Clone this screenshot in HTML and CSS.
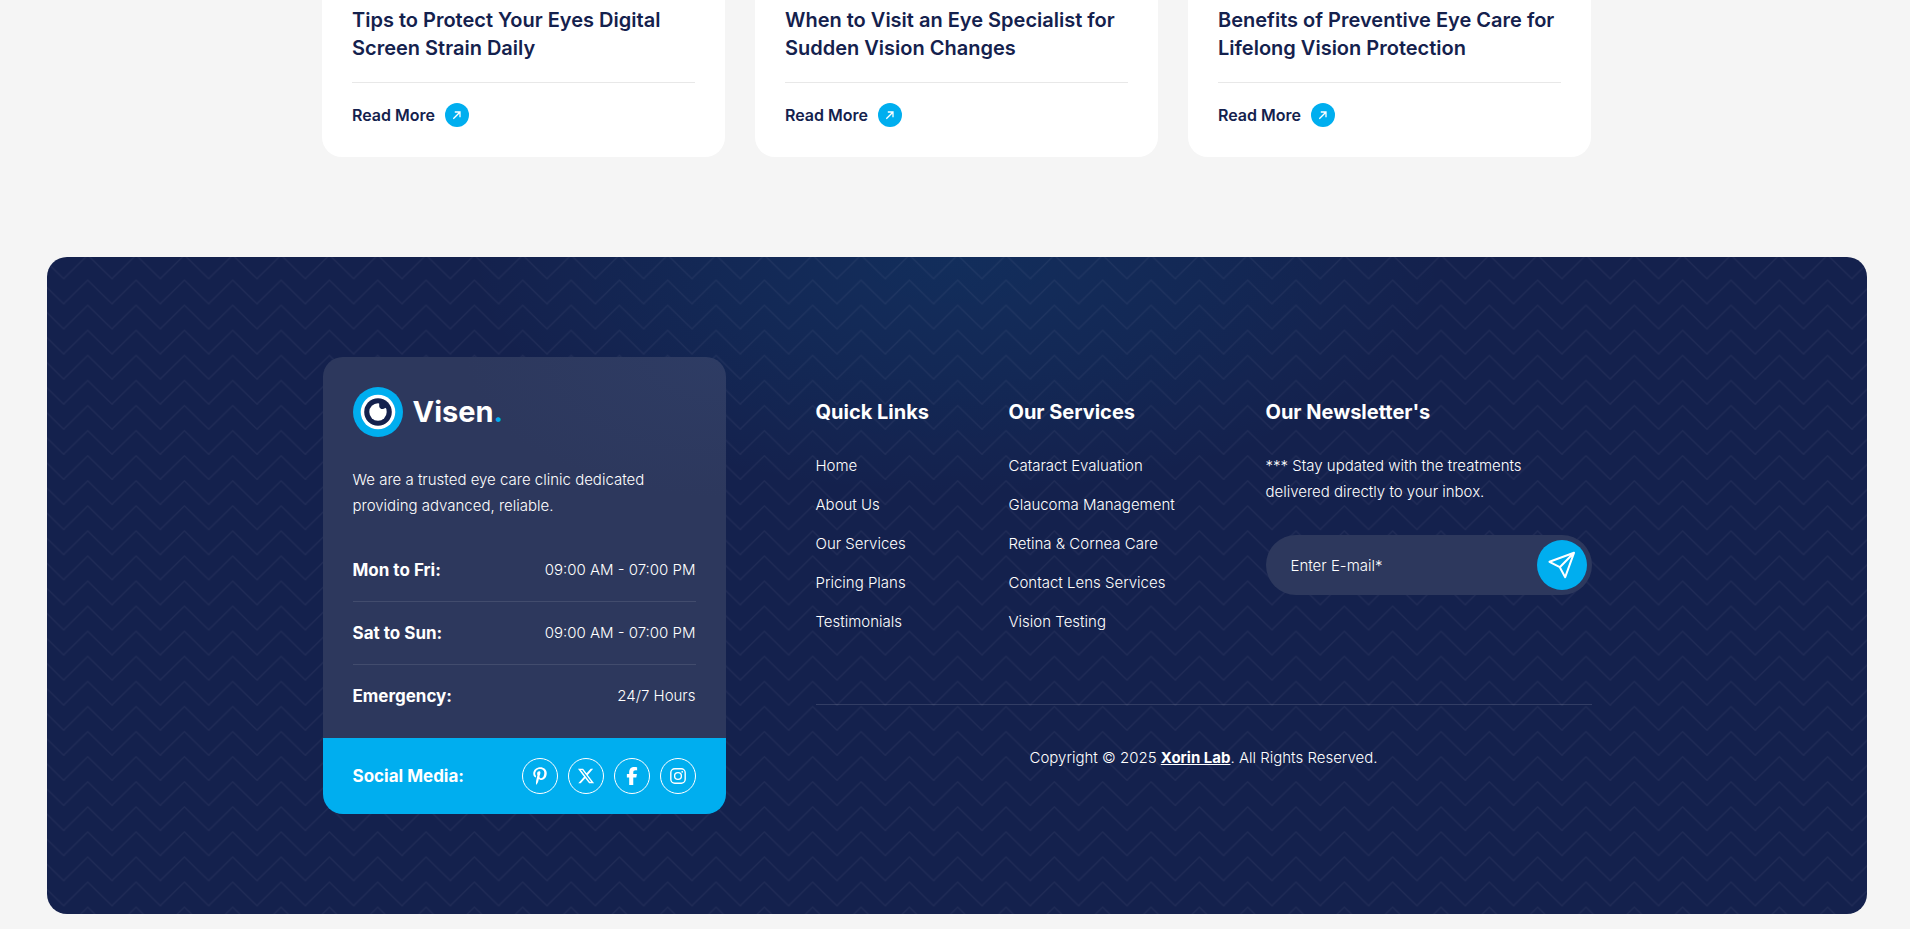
FILE: index.html
```html
<!DOCTYPE html>
<html lang="en">
<head>
<meta charset="utf-8">
<title>Visen</title>
<link rel="stylesheet" href="styles.css">
</head>
<body>
<svg class="symbols" aria-hidden="true">
  <symbol id="arrow" viewBox="0 0 24 24"><path d="M8.300 15.700 15.300 8.700M9.800 9h5.200v5.200" fill="none" stroke="#fff" stroke-width="1.300"/></symbol>
</svg>
<main class="posts container">
  <article class="post">
    <h2 class="post-title">Tips to Protect Your Eyes Digital Screen Strain Daily</h2>
    <div class="post-foot"><a class="read-more" href="#">Read More <svg class="arrow"><use href="#arrow"/></svg></a></div>
  </article>
  <article class="post">
    <h2 class="post-title">When to Visit an Eye Specialist for Sudden Vision Changes</h2>
    <div class="post-foot"><a class="read-more" href="#">Read More <svg class="arrow"><use href="#arrow"/></svg></a></div>
  </article>
  <article class="post">
    <h2 class="post-title">Benefits of Preventive Eye Care for Lifelong Vision Protection</h2>
    <div class="post-foot"><a class="read-more" href="#">Read More <svg class="arrow"><use href="#arrow"/></svg></a></div>
  </article>
</main>

<footer class="footer">
  <svg class="zigzag" aria-hidden="true">
    <defs>
      <pattern id="zig" width="48.33" height="25.08" patternUnits="userSpaceOnUse" x="16.6" y="22.4">
        <path d="M-24.16 .8 0 24.4 24.16 .8 48.33 24.4 72.5 .8M-1 25.3 0 24.4 1 25.3" fill="none" stroke="#fbe8ff" stroke-opacity=".05" stroke-width="1.3"/>
      </pattern>
    </defs>
    <rect width="100%" height="100%" fill="url(#zig)"/>
  </svg>
  <div class="container footer-grid">
    <section class="about">
      <div class="about-body">
        <a class="logo" href="#">
          <svg class="logo-mark" viewBox="0 0 50 50" aria-hidden="true">
            <circle cx="25" cy="25" r="25" fill="#00aeef"/>
            <circle cx="25" cy="25" r="17.3" fill="#fff"/>
            <circle cx="25" cy="25" r="13.8" fill="#14214d"/>
            <circle cx="25" cy="25" r="8.7" fill="#fff"/>
            <path d="M26.2 14v5.2c.2 2.1 2.6 3.600 4.500 2.600l4.300-2.100L30 14z" fill="#14214d"/>
          </svg>
          <span class="logo-name">Visen<span class="logo-dot">.</span></span>
        </a>
        <p class="about-text">We are a trusted eye care clinic dedicated providing advanced, reliable.</p>
        <ul class="hours">
          <li><strong>Mon to Fri:</strong><span>09:00 AM - 07:00 PM</span></li>
          <li><strong>Sat to Sun:</strong><span>09:00 AM - 07:00 PM</span></li>
          <li><strong>Emergency:</strong><span>24/7 Hours</span></li>
        </ul>
      </div>
      <div class="social">
        <strong>Social Media:</strong>
        <nav class="social-links" aria-label="Social media">
          <a href="#" aria-label="Pinterest"><svg viewBox="0 0 384 512" width="14" height="18"><path fill="#fff" d="M204 6.500C101.400 6.500 0 74.900 0 185.600 0 256 39.600 296 63.600 296c9.900 0 15.600-27.600 15.600-35.400 0-9.300-23.700-29.100-23.700-67.800 0-80.400 61.200-137.400 140.400-137.400 68.100 0 118.500 38.700 118.500 109.800 0 53.100-21.300 152.700-90.300 152.700-24.900 0-46.200-18-46.200-43.800 0-37.800 26.400-74.400 26.400-113.400 0-66.200-93.900-54.200-93.900 25.800 0 16.800 2.100 35.400 9.600 50.700-13.800 59.400-42 147.900-42 209.100 0 18.900 2.700 37.500 4.500 56.400 3.400 3.800 1.700 3.400 6.900 1.500 50.400-69 48.600-82.500 71.400-172.800 12.300 23.400 44.100 36 69.300 36 106.200 0 153.900-103.500 153.900-196.800C384 71.300 298.200 6.500 204 6.500z"/></svg></a>
          <a href="#" aria-label="X"><svg viewBox="0 0 512 512" width="18" height="18"><path fill="#fff" d="M389.200 48h70.600L305.600 224.200 487 464H345L233.700 318.600 106.500 464H35.800L200.700 275.500 26.800 48H172.400L272.900 180.900 389.200 48zM364.400 421.800h39.100L151.100 88h-42L364.400 421.800z"/></svg></a>
          <a href="#" aria-label="Facebook"><svg viewBox="0 0 320 512" width="12" height="18"><path fill="#fff" d="M80 299.300V512H196V299.300h86.500l18-97.800H196V166.900c0-51.700 20.300-71.500 72.700-71.500 16.300 0 29.400.4 37 1.200V7.900C291.400 4 256.400 0 236.200 0 129.300 0 80 50.500 80 159.400v42.100H14v97.800H80z"/></svg></a>
          <a href="#" aria-label="Instagram"><svg viewBox="0 0 16 16" width="16" height="16" fill="none" stroke="#fff" stroke-width="1.4"><rect x=".8" y=".8" width="14.400" height="14.400" rx="4"/><circle cx="8" cy="8" r="3.400"/><circle cx="12.200" cy="3.800" r=".9" fill="#fff" stroke="none"/></svg></a>
        </nav>
      </div>
    </section>

    <div class="footer-main">
      <div class="columns">
        <section>
          <h3 class="column-title">Quick Links</h3>
          <ul class="links">
            <li><a href="#">Home</a></li>
            <li><a href="#">About Us</a></li>
            <li><a href="#">Our Services</a></li>
            <li><a href="#">Pricing Plans</a></li>
            <li><a href="#">Testimonials</a></li>
          </ul>
        </section>
        <section>
          <h3 class="column-title">Our Services</h3>
          <ul class="links">
            <li><a href="#">Cataract Evaluation</a></li>
            <li><a href="#">Glaucoma Management</a></li>
            <li><a href="#">Retina &amp; Cornea Care</a></li>
            <li><a href="#">Contact Lens Services</a></li>
            <li><a href="#">Vision Testing</a></li>
          </ul>
        </section>
        <section>
          <h3 class="column-title">Our Newsletter's</h3>
          <p class="newsletter-text">*** Stay updated with the treatments delivered directly to your inbox.</p>
          <form class="subscribe">
            <input class="email" type="email" placeholder="Enter E-mail*" aria-label="Enter E-mail">
            <button class="send" type="button" aria-label="Subscribe">
              <svg viewBox="0 0 28 28" width="28" height="28" fill="none" stroke="#fff" stroke-width="2" stroke-linejoin="round" stroke-linecap="round"><path d="M26 1.800 1.500 10.800 11.800 16.200 17.200 26.200zM11.800 16.200 25 2.800"/></svg>
            </button>
          </form>
        </section>
      </div>
      <p class="copyright">Copyright © 2025 <a href="#">Xorin Lab</a>. All Rights Reserved.</p>
    </div>
  </div>
</footer>
</body>
</html>
```
FILE: styles.css
```css
* {
  box-sizing: border-box;
}

body {
  margin: 0;
  padding-left: 3px;
  background: #f5f5f5;
  color: #14214d;
  font-family: Inter, "Liberation Sans", sans-serif;
  font-size: 15px;
  line-height: 26px;
}

h2, h3, p, ul {
  margin: 0;
  padding: 0;
}

ul {
  list-style: none;
}

a {
  color: inherit;
  text-decoration: none;
}

.symbols {
  display: none;
}

.container {
  width: 100%;
  max-width: 1269px;
  margin: 0 auto;
}

.posts {
  display: grid;
  grid-template-columns: repeat(3, 1fr);
  gap: 30px;
}

.post {
  padding: 6px 30px 30px;
  background: #fff;
  border-radius: 0 0 20px 20px;
}

.post-title {
  font-size: 20px;
  font-weight: 600;
  line-height: 28px;
}

.post-foot {
  margin-top: 20px;
  padding-top: 20px;
  border-top: 1px solid #e8e8e8;
}

.read-more {
  display: flex;
  align-items: center;
  gap: 10px;
  height: 24px;
  font-size: 16px;
  font-weight: 600;
}

.arrow {
  width: 24px;
  height: 24px;
  border-radius: 50%;
  background: #00aeef;
}

.footer {
  position: relative;
  overflow: hidden;
  margin: 100px 43px 15px 44px;
  padding: 100px 0;
  border-radius: 20px;
  background: radial-gradient(ellipse 490px 240px at 50% 0, rgba(0, 174, 239, .09), rgba(0, 174, 239, .05) 50%, rgba(0, 174, 239, 0)) #14214d;
  color: #fff;
}

.zigzag {
  position: absolute;
  inset: 0;
  width: 100%;
  height: 100%;
}

.footer-grid {
  position: relative;
  display: flex;
  gap: 90px;
}

.about {
  flex: 0 0 403px;
  overflow: hidden;
  border-radius: 20px;
}

.about-body {
  padding: 30px 30px 29px;
  background: radial-gradient(ellipse 260px 140px at 100% 0, #2e3c64, #2d385d);
}

.logo {
  display: flex;
  align-items: center;
  gap: 10px;
}

.logo-mark {
  width: 50px;
  height: 50px;
}

.logo-name {
  font-size: 29px;
  font-weight: 700;
}

.logo-dot {
  color: #00aeef;
}

.about-text {
  margin: 30px 0 38px;
}

.about-text, .hours, .links, .newsletter-text, .copyright {
  font-weight: 300;
}

.hours li {
  display: flex;
  justify-content: space-between;
  padding-bottom: 18px;
  border-bottom: 1px solid rgba(255, 255, 255, .1);
}

.hours li + li {
  padding-top: 18px;
}

.hours li:last-child {
  padding-bottom: 0;
  border-bottom: 0;
}

strong {
  font-size: 17px;
  font-weight: 700;
}

.social {
  display: flex;
  align-items: center;
  justify-content: space-between;
  padding: 20px 30px;
  background: #00aeef;
}

.social-links {
  display: flex;
  gap: 10px;
}

.social-links a {
  display: flex;
  align-items: center;
  justify-content: center;
  width: 36px;
  height: 36px;
  border: 1px solid #fff;
  border-radius: 50%;
}

.footer-main {
  flex: 1;
  padding-top: 41px;
}

.columns {
  display: grid;
  grid-template-columns: minmax(0, 193fr) minmax(0, 257fr) minmax(0, 326fr);
  padding-bottom: 69px;
  border-bottom: 1px solid rgba(255, 255, 255, .13);
}

.column-title {
  margin-bottom: 27px;
  font-size: 20px;
  font-weight: 700;
  line-height: 28px;
}

.links {
  display: grid;
  gap: 13px;
}

.newsletter-text {
  padding-right: 40px;
}

.subscribe {
  display: flex;
  align-items: center;
  margin-top: 30px;
  padding: 5px;
  border-radius: 30px;
  background: #2d385d;
}

.email {
  flex: 1;
  min-width: 0;
  height: 50px;
  padding: 0 20px;
  border: 0;
  outline: 0;
  background: none;
  color: #fff;
  font: inherit;
  font-weight: 300;
}

.email::placeholder {
  color: #fff;
  opacity: 1;
}

.send {
  display: flex;
  align-items: center;
  justify-content: center;
  width: 50px;
  height: 50px;
  padding: 0;
  border: 0;
  border-radius: 50%;
  background: #00aeef;
}

.copyright {
  margin-top: 40px;
  text-align: center;
}

.copyright a {
  font-weight: 700;
  text-decoration: underline;
}
```
